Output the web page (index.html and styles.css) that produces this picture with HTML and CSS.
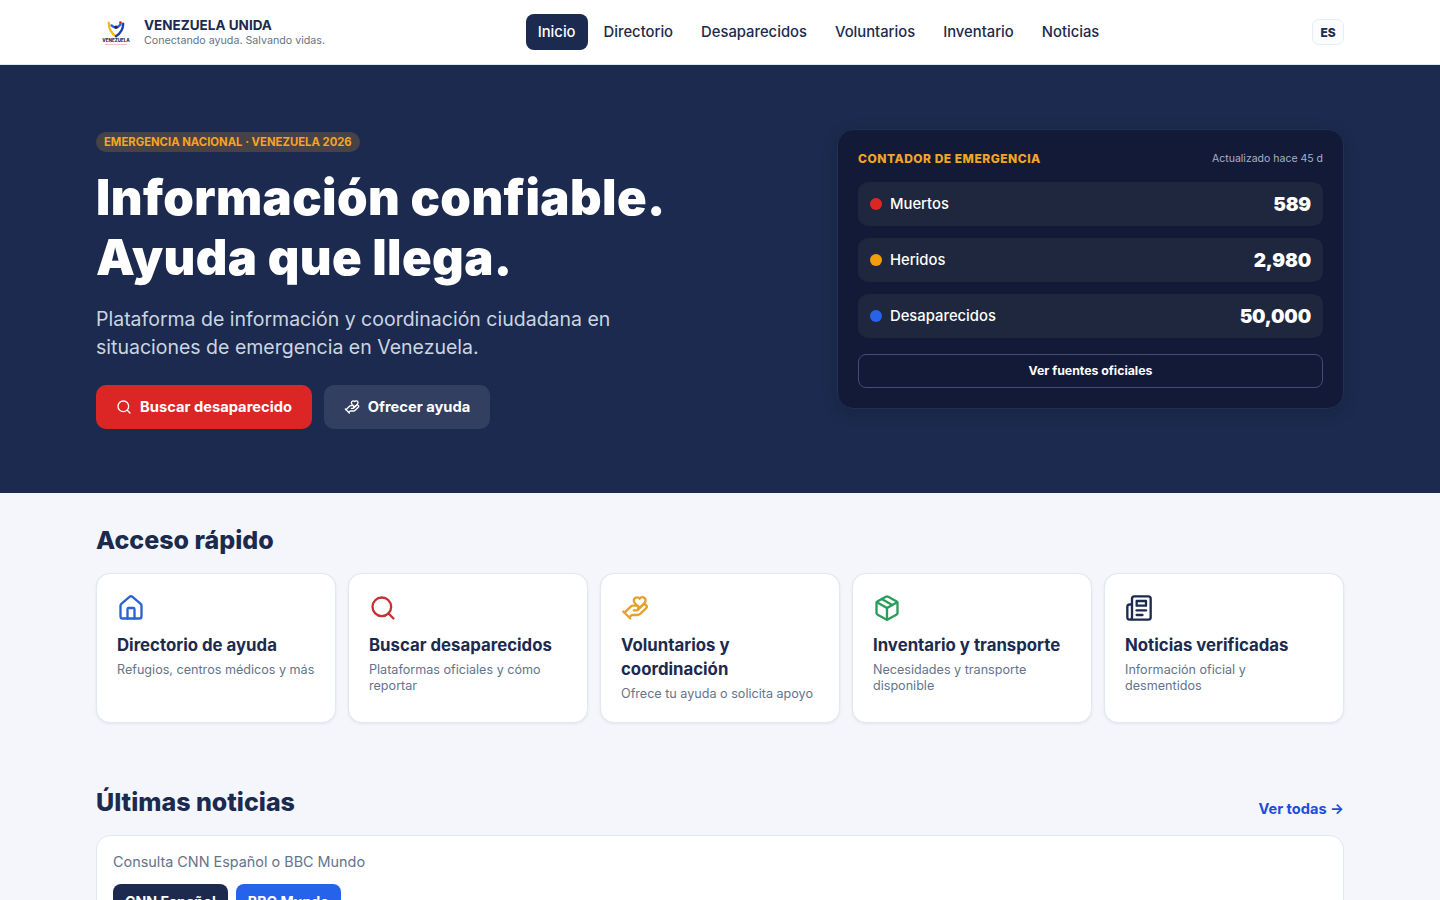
FILE: index.html
```html
<!DOCTYPE html>
<html lang="es">
<head>
    <meta charset="UTF-8">
    <meta name="viewport" content="width=device-width, initial-scale=1.0">
    <title>Venezuela Unida</title>
    <link rel="stylesheet" href="styles.css">
</head>
<body>
    <header class="topbar">
        <div class="brand">
            <div class="brand-logo">
                <svg class="brand-mark" viewBox="0 0 24 20" fill="none" stroke-width="2.6" stroke-linecap="round">
                    <path d="M4 3c0 7 3 12 8 15" stroke="#f5b81f"/>
                    <path d="M20 4c0 7-3 11-8 14" stroke="#1e40af"/>
                    <path d="M7 6c3 3 7 3 10-1" stroke="#2563eb"/>
                    <circle cx="12" cy="8" r="2" fill="#1b2a4e" stroke="none"/>
                    <circle cx="17" cy="3" r="1.6" fill="#dc2626" stroke="none"/>
                </svg>
                <span class="brand-micro">VENEZUELA</span>
                <span class="brand-rule"></span>
            </div>
            <div>
                <div class="brand-name">VENEZUELA UNIDA</div>
                <div class="brand-tag">Conectando ayuda. Salvando vidas.</div>
            </div>
        </div>
        <nav class="nav">
            <a class="nav-link active">Inicio</a>
            <a class="nav-link">Directorio</a>
            <a class="nav-link">Desaparecidos</a>
            <a class="nav-link">Voluntarios</a>
            <a class="nav-link">Inventario</a>
            <a class="nav-link">Noticias</a>
        </nav>
        <button class="lang">ES</button>
    </header>

    <section class="hero">
        <div class="hero-inner">
            <div>
                <span class="hero-badge">EMERGENCIA NACIONAL · VENEZUELA 2026</span>
                <h1>Información confiable.<br>Ayuda que llega.</h1>
                <p class="hero-sub">Plataforma de información y coordinación ciudadana en situaciones de emergencia en Venezuela.</p>
                <div class="hero-actions">
                    <a class="btn btn-red">
                        <svg class="icon-btn" viewBox="0 0 24 24"><circle cx="11" cy="11" r="8"/><path d="m21 21-4.3-4.3"/></svg>
                        Buscar desaparecido
                    </a>
                    <a class="btn btn-slate">
                        <svg class="icon-btn" viewBox="0 0 24 24"><path d="M11 14h2a2 2 0 1 0 0-4h-3c-.6 0-1.1.2-1.4.6L3 16"/><path d="m7 20 1.6-1.4c.3-.4.8-.6 1.4-.6h4c1.1 0 2.1-.4 2.8-1.2l4.6-4.4a2 2 0 0 0-2.75-2.91l-4.2 3.9"/><path d="m2 15 6 6"/><path d="M19.5 8.5c.7-.7 1.5-1.6 1.5-2.7A2.73 2.73 0 0 0 16 4a2.78 2.78 0 0 0-5 1.8c0 1.2.8 2 1.5 2.8L16 12Z"/></svg>
                        Ofrecer ayuda
                    </a>
                </div>
            </div>
            <aside class="counter">
                <div class="counter-head">
                    <span class="counter-title">CONTADOR DE EMERGENCIA</span>
                    <span class="counter-time">Actualizado hace 45 d</span>
                </div>
                <div class="stat">
                    <span class="dot dot-red"></span>
                    <span class="stat-label">Muertos</span>
                    <span class="stat-value">589</span>
                </div>
                <div class="stat">
                    <span class="dot dot-amber"></span>
                    <span class="stat-label">Heridos</span>
                    <span class="stat-value">2,980</span>
                </div>
                <div class="stat">
                    <span class="dot dot-blue"></span>
                    <span class="stat-label">Desaparecidos</span>
                    <span class="stat-value">50,000</span>
                </div>
                <a class="counter-link">Ver fuentes oficiales</a>
            </aside>
        </div>
    </section>

    <main class="content">
        <h2 class="section-title">Acceso rápido</h2>
        <div class="quick-grid">
            <div class="quick-card">
                <svg class="quick-icon blue" viewBox="0 0 24 24"><path d="M15 21v-8a1 1 0 0 0-1-1h-4a1 1 0 0 0-1 1v8"/><path d="M3 10a2 2 0 0 1 .709-1.528l7-5.999a2 2 0 0 1 2.582 0l7 5.999A2 2 0 0 1 21 10v9a2 2 0 0 1-2 2H5a2 2 0 0 1-2-2z"/></svg>
                <h3>Directorio de ayuda</h3>
                <p>Refugios, centros médicos y más</p>
            </div>
            <div class="quick-card">
                <svg class="quick-icon red" viewBox="0 0 24 24"><circle cx="11" cy="11" r="8"/><path d="m21 21-4.3-4.3"/></svg>
                <h3>Buscar desaparecidos</h3>
                <p>Plataformas oficiales y cómo reportar</p>
            </div>
            <div class="quick-card">
                <svg class="quick-icon amber" viewBox="0 0 24 24"><path d="M11 14h2a2 2 0 1 0 0-4h-3c-.6 0-1.1.2-1.4.6L3 16"/><path d="m7 20 1.6-1.4c.3-.4.8-.6 1.4-.6h4c1.1 0 2.1-.4 2.8-1.2l4.6-4.4a2 2 0 0 0-2.75-2.91l-4.2 3.9"/><path d="m2 15 6 6"/><path d="M19.5 8.5c.7-.7 1.5-1.6 1.5-2.7A2.73 2.73 0 0 0 16 4a2.78 2.78 0 0 0-5 1.8c0 1.2.8 2 1.5 2.8L16 12Z"/></svg>
                <h3>Voluntarios y coordinación</h3>
                <p>Ofrece tu ayuda o solicita apoyo</p>
            </div>
            <div class="quick-card">
                <svg class="quick-icon green" viewBox="0 0 24 24"><path d="m7.5 4.27 9 5.15"/><path d="M21 8a2 2 0 0 0-1-1.73l-7-4a2 2 0 0 0-2 0l-7 4A2 2 0 0 0 3 8v8a2 2 0 0 0 1 1.73l7 4a2 2 0 0 0 2 0l7-4A2 2 0 0 0 21 16Z"/><path d="m3.3 7 8.7 5 8.7-5"/><path d="M12 22V12"/></svg>
                <h3>Inventario y transporte</h3>
                <p>Necesidades y transporte disponible</p>
            </div>
            <div class="quick-card">
                <svg class="quick-icon navy" viewBox="0 0 24 24"><path d="M4 22h16a2 2 0 0 0 2-2V4a2 2 0 0 0-2-2H8a2 2 0 0 0-2 2v16a2 2 0 0 1-2 2Zm0 0a2 2 0 0 1-2-2v-9c0-1.1.9-2 2-2h2"/><path d="M18 14h-8"/><path d="M15 18h-5"/><path d="M10 6h8v4h-8V6Z"/></svg>
                <h3>Noticias verificadas</h3>
                <p>Información oficial y desmentidos</p>
            </div>
        </div>

        <div class="news-head">
            <h2 class="section-title">Últimas noticias</h2>
            <a class="see-all">Ver todas →</a>
        </div>
        <div class="news-card">
            <p>Consulta CNN Español o BBC Mundo</p>
            <div class="news-links">
                <a class="news-btn news-navy">CNN Español</a>
                <a class="news-btn news-blue">BBC Mundo</a>
            </div>
        </div>
    </main>
</body>
</html>
```

FILE: styles.css
```css
* {
    box-sizing: border-box;
}
body {
    margin: 0;
    font-family: Inter, "Noto Sans", sans-serif;
    background-color: #f4f6fb;
    color: #1b2a4e;
}
h1, h2, h3, p {
    margin: 0;
}

/* header */
.topbar {
    display: flex;
    justify-content: space-between;
    align-items: center;
    height: 65px;
    padding: 0 96px;
    background: white;
    border-bottom: 1px solid #dde6f3;
}
.brand {
    display: flex;
    align-items: center;
    gap: 8px;
    width: 229px;
}
.brand-logo {
    display: flex;
    flex-direction: column;
    align-items: center;
    flex-shrink: 0;
    width: 40px;
}
.brand-mark {
    width: 22px;
    height: 18px;
}
.brand-micro {
    font-size: 4.5px;
    line-height: 5px;
    font-weight: 800;
    color: #1b2a4e;
}
.brand-rule {
    width: 22px;
    height: 1px;
    margin-top: 1px;
    background: #eec4c4;
}
.brand-name {
    font-size: 13.5px;
    line-height: 18px;
    font-weight: 700;
    white-space: nowrap;
}
.brand-tag {
    font-size: 10.7px;
    line-height: 14px;
    color: #64748b;
    white-space: nowrap;
}
.nav {
    display: flex;
    gap: 4px;
}
.nav-link {
    padding: 0 12px;
    height: 36px;
    line-height: 36px;
    font-size: 14.8px;
    font-weight: 500;
    border-radius: 8px;
    color: #1b2a4e;
}
.nav-link.active {
    background: #1b2a4e;
    color: white;
}
.lang {
    width: 32px;
    height: 26px;
    padding: 0;
    font-family: inherit;
    font-size: 12px;
    font-weight: 800;
    color: #1b2a4e;
    background: #fbfcfe;
    border: 1px solid #e8edf4;
    border-radius: 7px;
}

/* hero */
.hero {
    height: 428px;
    padding: 64px 96px;
    background: #1b2a4e;
    color: white;
}
.hero-inner {
    display: grid;
    grid-template-columns: 1fr 507px;
    gap: 48px;
    align-items: start;
}
.hero-badge {
    display: block;
    width: fit-content;
    height: 20px;
    margin-top: 3px;
    padding: 0 8px;
    line-height: 20px;
    font-size: 11.3px;
    font-weight: 700;
    color: #f5a524;
    background: rgba(245, 165, 36, 0.2);
    border-radius: 10px;
}
h1 {
    margin-top: 16px;
    font-size: 49px;
    line-height: 60px;
    font-weight: 900;
    letter-spacing: 0.4px;
}
.hero-sub {
    margin-top: 17px;
    width: 540px;
    font-size: 19.5px;
    line-height: 28px;
    color: #cbd5e1;
}
.hero-actions {
    display: flex;
    gap: 12px;
    margin-top: 24px;
}
.btn {
    display: flex;
    align-items: center;
    justify-content: center;
    gap: 8px;
    height: 44px;
    font-size: 14.7px;
    font-weight: 700;
    border-radius: 10px;
}
.btn-red {
    width: 216px;
    background: #dc2626;
}
.btn-slate {
    width: 166px;
    background: rgba(255, 255, 255, 0.1);
}
.icon-btn {
    width: 16px;
    height: 16px;
    fill: none;
    stroke: white;
    stroke-width: 2;
    stroke-linecap: round;
    stroke-linejoin: round;
}

/* emergency counter */
.counter {
    padding: 20px;
    background: #121a38;
    border: 1px solid #232f50;
    border-radius: 16px;
    box-shadow: 0 4px 16px rgba(0, 0, 0, 0.15);
}
.counter-head {
    display: flex;
    justify-content: space-between;
    align-items: center;
    height: 16px;
    margin-bottom: 16px;
}
.counter-title {
    font-size: 12px;
    font-weight: 800;
    letter-spacing: 0.5px;
    color: #f5a524;
}
.counter-time {
    font-size: 10.5px;
    color: #a8b2c2;
}
.stat {
    display: flex;
    align-items: center;
    height: 44px;
    padding: 0 12px;
    margin-bottom: 12px;
    background: #1e273d;
    border-radius: 10px;
}
.dot {
    width: 12px;
    height: 12px;
    margin-right: 8px;
    border-radius: 50%;
}
.dot-red {
    background: #dc2626;
}
.dot-amber {
    background: #f59e0b;
}
.dot-blue {
    background: #2563eb;
}
.stat-label {
    flex-grow: 1;
    font-size: 14.8px;
    font-weight: 500;
}
.stat-value {
    font-size: 19px;
    font-weight: 900;
    letter-spacing: -0.2px;
}
.counter-link {
    display: block;
    height: 34px;
    margin-top: 16px;
    line-height: 32px;
    text-align: center;
    font-size: 12.3px;
    font-weight: 700;
    border: 1px solid #414e6e;
    border-radius: 8px;
}

/* quick access */
.content {
    padding: 28px 96px 40px;
}
.section-title {
    font-size: 25px;
    line-height: 38px;
    font-weight: 800;
}
.quick-grid {
    display: grid;
    grid-template-columns: repeat(5, 1fr);
    gap: 12px;
    margin-top: 14px;
}
.quick-card {
    height: 150px;
    padding: 20px;
    background: white;
    border: 1px solid #e2e8f0;
    border-radius: 14px;
    box-shadow: 0 1px 3px rgba(15, 23, 42, 0.08);
}
.quick-icon {
    display: block;
    width: 28px;
    height: 28px;
    margin-bottom: 11px;
    fill: none;
    stroke-width: 2;
    stroke-linecap: round;
    stroke-linejoin: round;
}
.blue {
    stroke: #2b62d0;
}
.red {
    stroke: #c53030;
}
.amber {
    stroke: #e8a02c;
}
.green {
    stroke: #2a9d5c;
}
.navy {
    stroke: #1b2a4e;
}
.quick-card h3 {
    font-size: 16.8px;
    line-height: 24px;
    font-weight: 700;
}
.quick-card p {
    margin-top: 5px;
    font-size: 12.6px;
    line-height: 16px;
    color: #64748b;
}

/* news */
.news-head {
    display: flex;
    justify-content: space-between;
    align-items: flex-end;
    margin-top: 60px;
}
.see-all {
    font-size: 14.6px;
    line-height: 24px;
    font-weight: 700;
    color: #1d4ed8;
}
.news-card {
    margin-top: 14px;
    padding: 16px;
    background: white;
    border: 1px solid #e2e8f0;
    border-radius: 14px;
}
.news-card p {
    font-size: 14.4px;
    line-height: 20px;
    color: #64748b;
}
.news-links {
    display: flex;
    gap: 8px;
    margin-top: 12px;
}
.news-btn {
    height: 36px;
    padding: 0 12px;
    line-height: 36px;
    font-size: 14.2px;
    font-weight: 700;
    color: white;
    border-radius: 8px;
}
.news-navy {
    background: #1b2a4e;
}
.news-blue {
    background: #2563eb;
}
```
